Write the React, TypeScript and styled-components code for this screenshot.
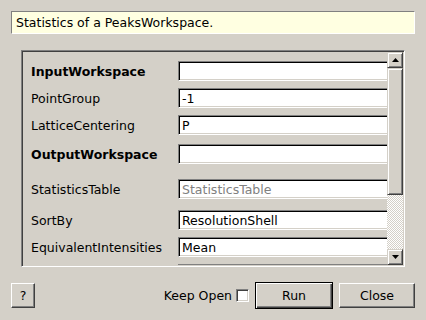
import React from "react";
import styled, { createGlobalStyle } from "styled-components";

const Global = createGlobalStyle`
  html, body { margin: 0; padding: 0; background: #d4d0c8; }
  body { font-family: "DejaVu Sans", sans-serif; font-size: 12.5px; color: #000; }
  * { box-sizing: border-box; }
`;

const Dialog = styled.div`
  width: 426px;
  height: 320px;
  padding: 11px 11px 0 11px;
  display: flex;
  flex-direction: column;
  overflow: hidden;
`;

const Description = styled.div`
  height: 23px;
  flex-shrink: 0;
  background: #ffffe1;
  border-top: 1px solid #808080;
  border-left: 1px solid #808080;
  border-bottom: 1px solid #ffffff;
  border-right: 1px solid #ffffff;
  padding: 0 4px;
  display: flex;
  align-items: center;
  white-space: nowrap;
`;

const Frame = styled.div`
  margin: 16px 10px 0 10px;
  height: 217px;
  flex-shrink: 0;
  border: 1px solid;
  border-color: #808080 #ffffff #ffffff #808080;
  box-shadow: inset 1px 1px 0 #404040, inset -1px -1px 0 #d4d0c8;
  padding: 1px;
  display: flex;
`;

const Content = styled.div`
  flex: 1;
  overflow: hidden;
  padding: 9px 0 0 8px;
  display: flex;
  flex-direction: column;
`;

const Row = styled.div<{ $mt: number }>`
  display: flex;
  align-items: center;
  height: 20px;
  margin-top: ${(p) => p.$mt}px;
  flex-shrink: 0;
`;

const Label = styled.div<{ $bold?: boolean }>`
  width: 147px;
  flex-shrink: 0;
  font-weight: ${(p) => (p.$bold ? "bold" : "normal")};
  white-space: nowrap;
`;

const Field = styled.div<{ $placeholder?: boolean }>`
  width: 240px;
  flex-shrink: 0;
  height: 20px;
  background: #fff;
  border: 1px solid;
  border-color: #808080 #ffffff #ffffff #808080;
  box-shadow: inset 1px 1px 0 #000, inset -1px -1px 0 #d4d0c8;
  padding: 0 3px;
  display: flex;
  align-items: center;
  white-space: nowrap;
  color: ${(p) => (p.$placeholder ? "#808080" : "#000")};
`;

const ScrollBar = styled.div`
  width: 16px;
  flex-shrink: 0;
  display: flex;
  flex-direction: column;
`;

const ScrollButton = styled.div`
  height: 16px;
  flex-shrink: 0;
  background: #d4d0c8;
  border: 1px solid;
  border-color: #d4d0c8 #404040 #404040 #d4d0c8;
  box-shadow: inset 1px 1px 0 #fff, inset -1px -1px 0 #808080;
  display: flex;
  align-items: center;
  justify-content: center;
`;

const Thumb = styled.div`
  height: 127px;
  flex-shrink: 0;
  background: #d4d0c8;
  border: 1px solid;
  border-color: #d4d0c8 #404040 #404040 #d4d0c8;
  box-shadow: inset 1px 1px 0 #fff, inset -1px -1px 0 #808080;
`;

const Track = styled.div`
  flex: 1;
  background: repeating-conic-gradient(#ffffff 0 25%, #d4d0c8 0 50%) 0 0 / 2px 2px;
`;

const Footer = styled.div`
  margin-top: 15px;
  display: flex;
  align-items: center;
  height: 26px;
  flex-shrink: 0;
`;

const Button = styled.button<{ $default?: boolean; $w: number }>`
  font-family: "DejaVu Sans", sans-serif;
  font-size: 12.5px;
  color: #000;
  width: ${(p) => p.$w}px;
  height: ${(p) => (p.$default ? 27 : 25)}px;
  background: #d4d0c8;
  padding: 0;
  border: 1px solid;
  border-color: ${(p) => (p.$default ? "#000" : "#fff #404040 #404040 #fff")};
  box-shadow: ${(p) =>
    p.$default
      ? "inset 1px 1px 0 #fff, inset -1px -1px 0 #404040, inset -2px -2px 0 #808080"
      : "inset -1px -1px 0 #808080"};
  display: flex;
  align-items: center;
  justify-content: center;
`;

const Spacer = styled.div`
  flex: 1;
`;

const CheckLabel = styled.span`
  margin-right: 4px;
`;

const CheckBox = styled.span`
  width: 13px;
  height: 13px;
  background: #fff;
  border: 1px solid;
  border-color: #808080 #fff #fff #808080;
  box-shadow: inset 1px 1px 0 #404040, inset -1px -1px 0 #d4d0c8;
  margin-right: 6px;
`;

const Gap = styled.span`
  width: 6px;
`;

const Arrow = ({ down }: { down?: boolean }) => (
  <svg width="7" height="4" viewBox="0 0 7 4">
    <polygon points={down ? "0,0 7,0 3.5,4" : "3.5,0 7,4 0,4"} fill="#000" />
  </svg>
);

const rows = [
  { label: "InputWorkspace", bold: true, value: "", mt: 0 },
  { label: "PointGroup", value: "-1", mt: 7 },
  { label: "LatticeCentering", value: "P", mt: 7 },
  { label: "OutputWorkspace", bold: true, value: "", mt: 9 },
  { label: "StatisticsTable", value: "StatisticsTable", placeholder: true, mt: 15 },
  { label: "SortBy", value: "ResolutionShell", mt: 11 },
  { label: "EquivalentIntensities", value: "Mean", mt: 7 },
  { label: "", value: "", mt: 7 },
];

export default function App() {
  return (
    <>
      <Global />
      <Dialog>
        <Description>Statistics of a PeaksWorkspace.</Description>
        <Frame>
          <Content>
            {rows.map((r, i) => (
              <Row key={i} $mt={r.mt}>
                <Label $bold={r.bold}>{r.label}</Label>
                <Field $placeholder={r.placeholder}>{r.value}</Field>
              </Row>
            ))}
          </Content>
          <ScrollBar>
            <ScrollButton>
              <Arrow />
            </ScrollButton>
            <Thumb />
            <Track />
            <ScrollButton>
              <Arrow down />
            </ScrollButton>
          </ScrollBar>
        </Frame>
        <Footer>
          <Button $w={24}>?</Button>
          <Spacer />
          <CheckLabel>Keep Open</CheckLabel>
          <CheckBox />
          <Button $default $w={78}>Run</Button>
          <Gap />
          <Button $w={76}>Close</Button>
        </Footer>
      </Dialog>
    </>
  );
}
